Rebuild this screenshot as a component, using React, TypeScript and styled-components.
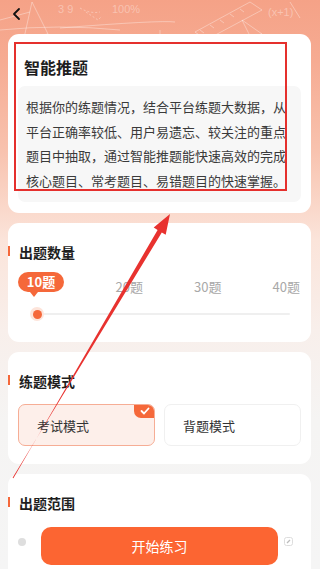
import React from "react";
import styled, { createGlobalStyle } from "styled-components";

const GlobalStyle = createGlobalStyle`
  html, body { margin: 0; padding: 0; }
  body {
    width: 320px;
    height: 569px;
    overflow: hidden;
    font-family: "Noto Sans CJK SC", "Noto Sans", sans-serif;
    background: #f5f5f5;
  }
`;

const Page = styled.div`
  position: relative;
  width: 320px;
  height: 569px;
  overflow: hidden;
  box-sizing: border-box;
  padding: 0 9px 0 8px;
  background: linear-gradient(
    180deg,
    #f5a287 0px,
    #f6ab92 60px,
    #f8c2ae 150px,
    #fbe4da 240px,
    #f8efeb 330px,
    #f5f4f3 420px,
    #f5f5f5 569px
  );
`;

const Doodles = styled.svg`
  position: absolute;
  left: 0;
  top: 0;
  width: 320px;
  height: 110px;
  pointer-events: none;
`;

const Header = styled.div`
  position: relative;
  height: 34px;
  display: flex;
  align-items: flex-start;
  padding-top: 7px;
  box-sizing: border-box;
`;

const Back = styled.svg`
  width: 10px;
  height: 14px;
  margin-left: 4px;
`;

const Stack = styled.div`
  position: relative;
  display: flex;
  flex-direction: column;
  gap: 10px;
`;

const Card = styled.div<{ $pt?: number; $pb?: number; $px?: number }>`
  background: #ffffff;
  border-radius: 11px;
  padding: ${(p) => p.$pt ?? 19}px ${(p) => p.$px ?? 10}px ${(p) => p.$pb ?? 18}px;
  box-sizing: border-box;
`;

const Title = styled.div`
  font-size: 16px;
  line-height: 22px;
  font-weight: 700;
  color: #1e1e1e;
  padding-left: 6px;
  margin-bottom: 8px;
`;

const DescBox = styled.div`
  background: #f7f7f7;
  border-radius: 7px;
  padding: 9px 8px 9px 8px;
  font-size: 13px;
  line-height: 24.5px;
  color: #3a3a3a;
`;

const Heading = styled.div`
  position: relative;
  font-size: 14px;
  line-height: 20px;
  font-weight: 700;
  color: #1e1e1e;
  padding-left: 1px;
  &::before {
    content: "";
    position: absolute;
    left: -10px;
    top: 4px;
    width: 2px;
    height: 10px;
    background: #f5683a;
  }
`;

const SliderArea = styled.div`
  position: relative;
  margin-top: 10px;
`;

const Labels = styled.div`
  display: flex;
  justify-content: space-between;
  padding: 0 1px 0 19px;
  height: 24px;
  align-items: flex-end;
  font-size: 13px;
  line-height: 18px;
  color: #a8a8a8;
`;

const Label = styled.span<{ $hidden?: boolean }>`
  visibility: ${(p) => (p.$hidden ? "hidden" : "visible")};
`;

const Bubble = styled.div`
  position: absolute;
  left: 0;
  top: 0;
  width: 46px;
  height: 20px;
  border-radius: 10px;
  background: #f5683a;
  color: #fff;
  font-size: 13px;
  font-weight: 700;
  line-height: 20px;
  text-align: center;
  &::after {
    content: "";
    position: absolute;
    left: 12px;
    bottom: -5px;
    border-left: 4px solid transparent;
    border-right: 4px solid transparent;
    border-top: 5px solid #f5683a;
  }
`;

const Track = styled.div`
  position: relative;
  height: 2px;
  margin: 17px 11px 0 22px;
  background: #efefef;
  border-radius: 1px;
`;

const Thumb = styled.div`
  position: absolute;
  left: -10px;
  top: -6px;
  width: 14px;
  height: 14px;
  border-radius: 50%;
  background: #fde4da;
  display: flex;
  align-items: center;
  justify-content: center;
  &::after {
    content: "";
    width: 9px;
    height: 9px;
    border-radius: 50%;
    background: #f5683a;
  }
`;

const Options = styled.div`
  display: grid;
  grid-template-columns: 1fr 1fr;
  gap: 9px;
  margin-top: 13px;
`;

const Option = styled.div<{ $active?: boolean }>`
  position: relative;
  height: 42px;
  box-sizing: border-box;
  border-radius: 7px;
  border: 1px solid ${(p) => (p.$active ? "#f6ad95" : "#f0f0f0")};
  background: ${(p) => (p.$active ? "#fdefea" : "#ffffff")};
  display: flex;
  align-items: center;
  padding-left: 18px;
  font-size: 13px;
  color: #333;
  overflow: hidden;
`;

const CheckBadge = styled.div`
  position: absolute;
  right: -1px;
  top: -1px;
  width: 21px;
  height: 14px;
  background: #f5683a;
  border-radius: 0 7px 0 7px;
  display: flex;
  align-items: center;
  justify-content: center;
`;

const RangeRow = styled.div`
  display: flex;
  justify-content: space-between;
  align-items: center;
  margin-top: 24px;
  padding: 0 8px 0 0;
`;

const Dot = styled.div`
  width: 8px;
  height: 8px;
  border-radius: 50%;
  background: #dedede;
`;

const EditIcon = styled.svg`
  width: 9px;
  height: 9px;
`;

const StartButton = styled.button`
  position: absolute;
  left: 41px;
  bottom: 4px;
  width: 237px;
  height: 38px;
  border: none;
  border-radius: 10px;
  background: #fc6532;
  color: #fff;
  font-family: "Noto Sans CJK SC", sans-serif;
  font-size: 14px;
  padding: 0;
`;

const Highlight = styled.div`
  position: absolute;
  left: 14px;
  top: 42px;
  width: 273px;
  height: 149px;
  box-sizing: border-box;
  border: 2px solid #e5302d;
  pointer-events: none;
`;

const Arrow = styled.svg`
  position: absolute;
  left: 0;
  top: 0;
  width: 320px;
  height: 569px;
  pointer-events: none;
`;

export default function App() {
  return (
    <>
      <GlobalStyle />
      <Page>
        <Doodles viewBox="0 0 320 110">
          <g stroke="rgba(255,255,255,0.35)" strokeWidth="1" fill="none">
            <path d="M0 20 L30 12" />
            <path d="M24 38 L32 2 L48 34 Z" />
            <path d="M0 30 Q60 24 120 30" />
            <path d="M80 8 Q90 14 100 12 M86 12 L98 20 L102 16" strokeDasharray="2 2" />
            <path d="M60 28 Q160 20 175 22" />
            <path d="M195 32 L250 2 L262 10 L206 40 Z" />
            <path d="M200 30 l4 3 M210 25 l4 3 M220 20 l4 3 M230 14 l4 3 M240 9 l4 3" />
            <path d="M242 20 L262 34 L250 36 Z" />
            <path d="M160 30 L160 36" />
            <path d="M290 2 L300 18" />
          </g>
          <g fill="rgba(255,255,255,0.35)" fontFamily="Liberation Sans, sans-serif" fontSize="11">
            <text x="58" y="13">3 9</text>
            <text x="112" y="13">100%</text>
            <text x="268" y="16">(x+1)</text>
          </g>
        </Doodles>
        <Header>
          <Back viewBox="0 0 10 14">
            <polyline points="7,2 2,7 7,12" fill="none" stroke="#111" strokeWidth="1.8" strokeLinecap="round" strokeLinejoin="round" />
          </Back>
        </Header>
        <Stack>
          <Card $pt={22} $pb={11}>
            <Title>智能推题</Title>
            <DescBox>
              根据你的练题情况，结合平台练题大数据，从平台正确率较低、用户易遗忘、较关注的重点题目中抽取，通过智能推题能快速高效的完成核心题目、常考题目、易错题目的快速掌握。
            </DescBox>
          </Card>
          <Card $pb={27}>
            <Heading>出题数量</Heading>
            <SliderArea>
              <Labels>
                <Label $hidden>10题</Label>
                <Label>20题</Label>
                <Label>30题</Label>
                <Label>40题</Label>
              </Labels>
              <Bubble>10题</Bubble>
              <Track>
                <Thumb />
              </Track>
            </SliderArea>
          </Card>
          <Card>
            <Heading>练题模式</Heading>
            <Options>
              <Option $active>
                考试模式
                <CheckBadge>
                  <svg width="10" height="8" viewBox="0 0 10 8">
                    <polyline points="1.5,4 4,6.5 8.5,1.5" fill="none" stroke="#fff" strokeWidth="1.8" strokeLinecap="round" strokeLinejoin="round" />
                  </svg>
                </CheckBadge>
              </Option>
              <Option>背题模式</Option>
            </Options>
          </Card>
          <Card $pb={40}>
            <Heading>出题范围</Heading>
            <RangeRow>
              <Dot />
              <EditIcon viewBox="0 0 9 9">
                <rect x="0.5" y="0.5" width="8" height="8" rx="2" fill="none" stroke="#ddd" />
                <path d="M3 6 L6 3" stroke="#bbb" strokeWidth="1.2" />
              </EditIcon>
            </RangeRow>
          </Card>
        </Stack>
        <StartButton>开始练习</StartButton>
        <Highlight />
        <Arrow viewBox="0 0 320 569">
          <polygon
            fill="#e8322f"
            points="13.4,478.3 157.6,229.9 153.7,227.6 170,214 165.7,234.8 161.8,232.5 12.6,477.7"
          />
        </Arrow>
      </Page>
    </>
  );
}
